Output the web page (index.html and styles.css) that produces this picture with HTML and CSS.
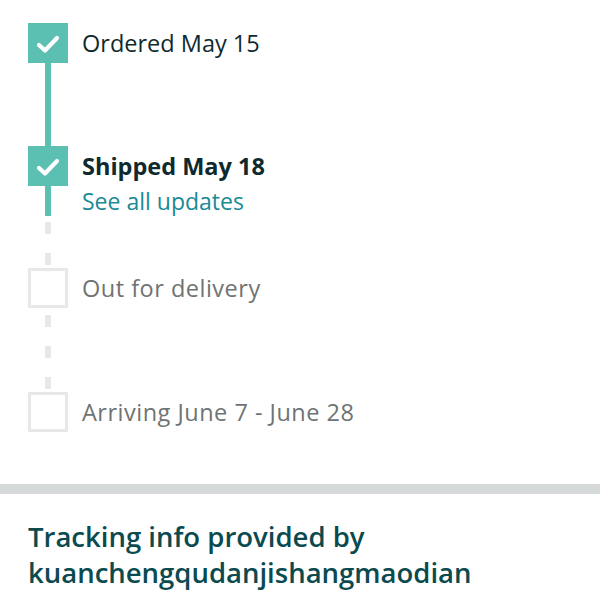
FILE: index.html
```html
<!DOCTYPE html>
<html lang="en">
<head>
<meta charset="utf-8">
<link rel="stylesheet" href="styles.css">
</head>
<body>
<div class="timeline">
  <div class="step">
    <div class="rail">
      <div class="box done"><svg viewBox="0 0 40 40" width="40" height="40"><path d="M11 22 L17 27.5 L29 15" fill="none" stroke="#fff" stroke-width="4.2" stroke-linecap="round" stroke-linejoin="round"/></svg></div>
      <div class="conn solid"></div>
    </div>
    <div class="text"><div class="title">Ordered May 15</div></div>
  </div>
  <div class="step">
    <div class="rail">
      <div class="box done"><svg viewBox="0 0 40 40" width="40" height="40"><path d="M11 22 L17 27.5 L29 15" fill="none" stroke="#fff" stroke-width="4.2" stroke-linecap="round" stroke-linejoin="round"/></svg></div>
      <div class="conn partial"></div>
    </div>
    <div class="text"><div class="title bold">Shipped May 18</div><a class="link" href="#">See all updates</a></div>
  </div>
  <div class="step">
    <div class="rail">
      <div class="box todo"></div>
      <div class="conn dashed"></div>
    </div>
    <div class="text"><div class="title muted">Out for delivery</div></div>
  </div>
  <div class="step last">
    <div class="rail">
      <div class="box todo"></div>
    </div>
    <div class="text"><div class="title muted">Arriving June 7 - June 28</div></div>
  </div>
</div>
<div class="divider"></div>
<div class="provider">Tracking info provided by kuanchengqudanjishangmaodian</div>
</body>
</html>
```
FILE: styles.css
```css
html, body { margin: 0; padding: 0; background: #fff; }
body { font-family: "Open Sans", "Noto Sans", sans-serif; color: #0f2a2e; }
.timeline { padding: 23px 28px 52px; }
.step { display: flex; gap: 14px; }
.rail { width: 40px; display: flex; flex-direction: column; align-items: center; }
.box { width: 40px; height: 40px; box-sizing: border-box; }
.box svg { display: block; }
.done { background: #5bbfb1; }
.todo { border: 3px solid #e8e8e8; }
.conn { width: 6px; height: 83px; }
.solid { background: #5bbfb1; }
.partial {
  height: 82px;
  background:
    linear-gradient(#5bbfb1, #5bbfb1) top / 6px 30px no-repeat,
    repeating-linear-gradient(to bottom, transparent 0 5px, #e8e8e8 5px 17px, transparent 17px 31px);
}
.dashed {
  height: 84px;
  background: repeating-linear-gradient(to bottom, transparent 0 7px, #e8e8e8 7px 19px, transparent 19px 31px);
}
.text { display: flex; flex-direction: column; }
.title { font-size: 23.5px; line-height: 40px; color: #0f2a2e; }
.bold { font-weight: 700; }
.muted { color: #6f7373; letter-spacing: 0.5px; }
.link { font-size: 23px; line-height: 30px; color: #1a8a96; text-decoration: none; margin-top: 0; }
.divider { height: 10px; background: #d5d9d9; }
.provider { padding: 25px 28px 0; font-size: 27.5px; line-height: 36px; color: #0b4a4f; font-weight: 600; width: 480px; }
```
